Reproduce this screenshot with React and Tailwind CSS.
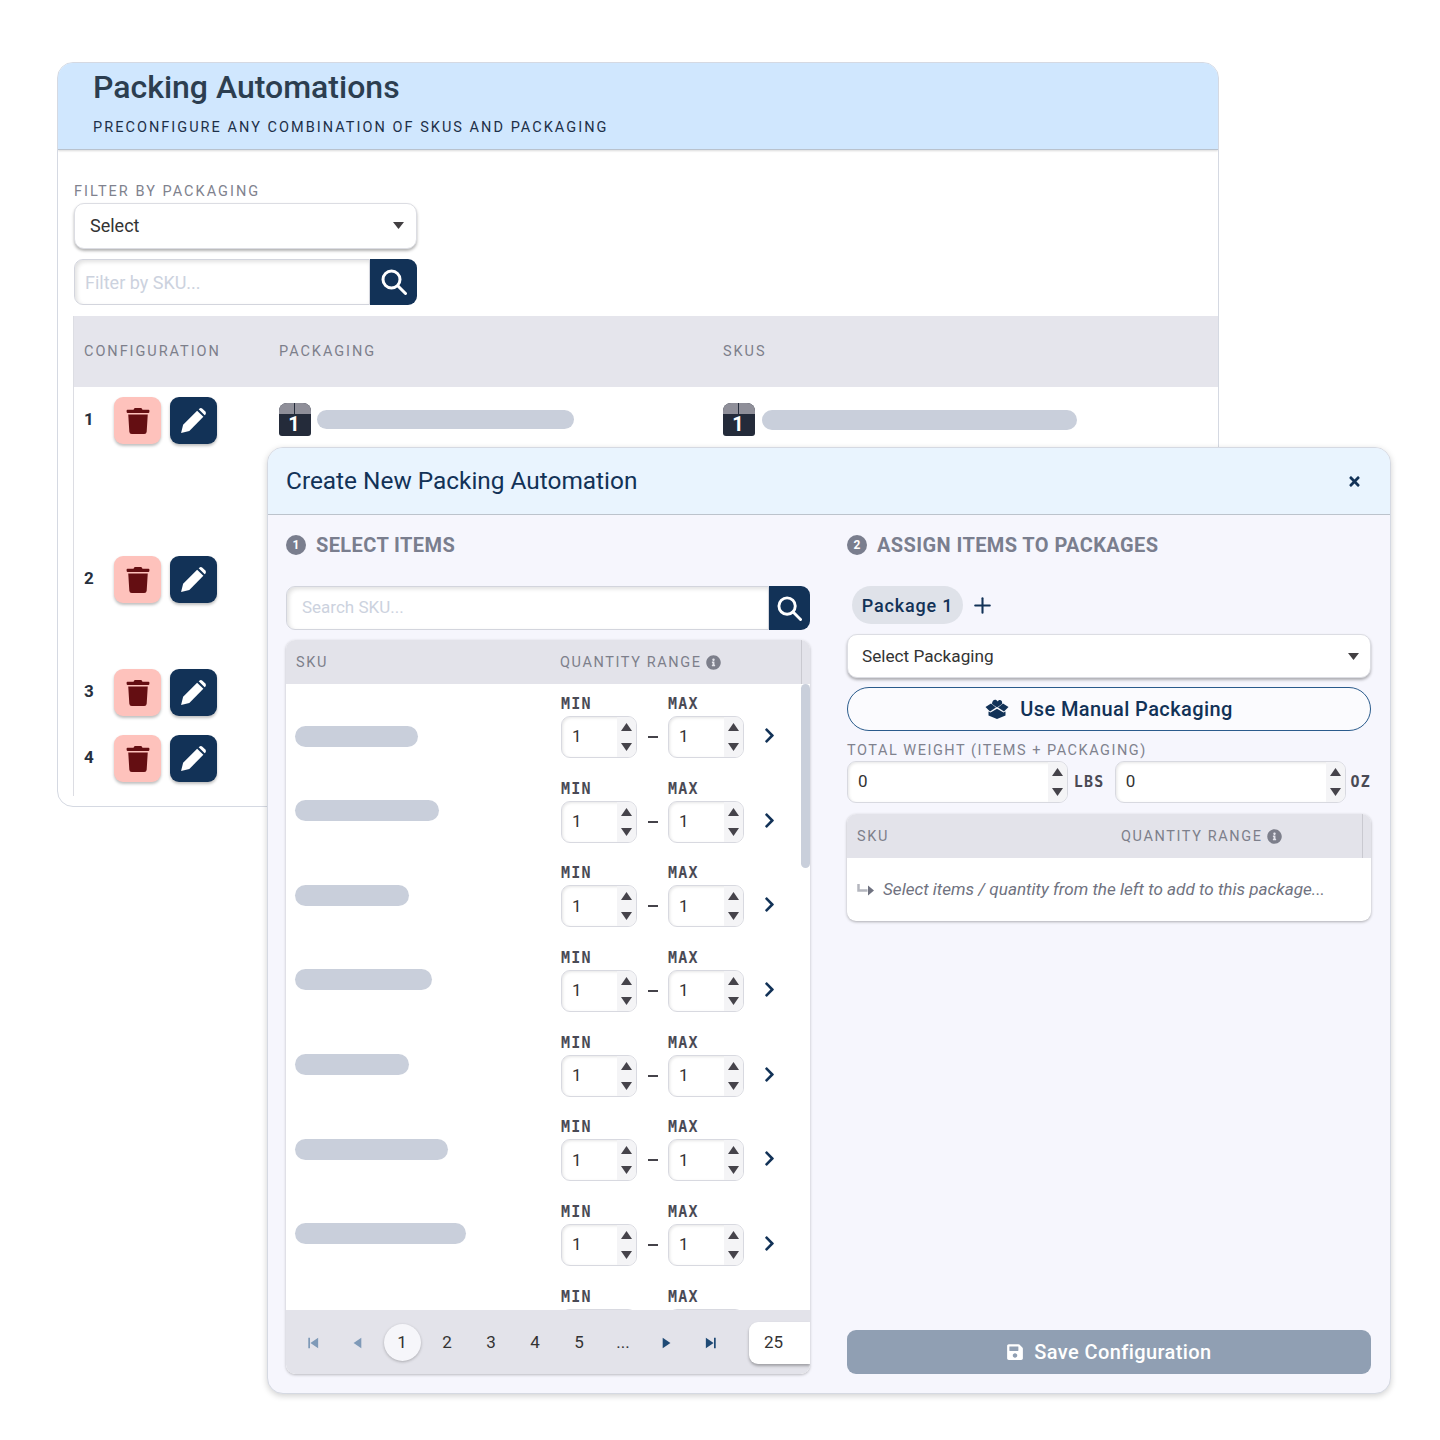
import { FaChevronRight, FaInfoCircle, FaSave, FaTimes, FaTrash } from 'react-icons/fa';
import { Plus } from 'lucide-react';

const configRows = [
  { id: 1, height: 'h-[159px]' },
  { id: 2, height: 'h-[113px]' },
  { id: 3, height: 'h-[66px]' },
  { id: 4, height: 'h-[61px]' },
];

const skuWidths = ['w-[123px]', 'w-[144px]', 'w-[114px]', 'w-[137px]', 'w-[114px]', 'w-[153px]', 'w-[171px]'];

const PackageBox = () => (
  <div className="relative h-[33px] w-[32px] shrink-0 overflow-hidden rounded-b-[3px] rounded-t-[8px] bg-[#242b3a]">
    <div className="h-[11px] bg-[#8f8f99]" />
    <div className="absolute left-[15px] top-0 h-[11px] w-[1px] bg-[#242b3a]" />
    <div className="absolute inset-x-0 top-[9px] pr-[2px] text-center text-[20px] font-bold leading-[24px] text-white">1</div>
  </div>
);

const Caret = () => (
  <svg width="11" height="7" viewBox="0 0 11 7">
    <path d="M0 0h11L5.5 7z" fill="#423f42" />
  </svg>
);

const SearchIcon = ({ size }) => (
  <svg width={size} height={size} viewBox="0 0 26 26" fill="none" stroke="currentColor" strokeWidth="3" strokeLinecap="round">
    <circle cx="10.5" cy="10.5" r="8.5" />
    <path d="M17 17l7.500 7.500" />
  </svg>
);

const PencilIcon = () => (
  <svg width="27" height="27" viewBox="0 0 26 26" fill="currentColor">
    <path d="M1 25l2-8L16.500 3.500l6 6L9 23z" />
    <path d="M18 2.200l.6-.6q1.500-1.300 3 0l2.800 2.800q1.300 1.500 0 3l-.6.6z" />
  </svg>
);

const ManualBoxIcon = () => (
  <svg width="24" height="20" viewBox="0 0 24 20" fill="currentColor">
    <path d="M7 5c0-5 4.500-5.500 5.500-2.500C14 0 18 .5 17 5l-5 3.500z" />
    <path d="M.5 8L6 4.500l5 4L5 12.500zM23.500 8L18 4.500l-5 4 6 4z" />
    <path d="M3.500 12.500l2 1L12 9.800l6.500 3.700 2-1V16.500L12 20 3.500 16.500z" />
  </svg>
);

const SearchBox = ({ placeholder, height, width, button, text, inset, icon }) => (
  <div className={`flex ${height} ${width}`}>
    <input
      readOnly
      placeholder={placeholder}
      className={`min-w-0 flex-1 rounded-l-[9px] border border-[#d3d5dd] bg-white ${inset} ${text} text-[#333] shadow-[inset_2px_2px_4px_rgba(0,0,0,0.12)] outline-none placeholder:text-[#ccd2de]`}
    />
    <div className={`flex ${button} items-center justify-center rounded-r-[9px] bg-[#123257] text-white`}>
      <SearchIcon size={icon} />
    </div>
  </div>
);

const SelectBox = ({ label, width, height, text, inset }) => (
  <div className={`flex ${width} ${height} items-center justify-between rounded-[10px] border border-[#dcdde3] bg-white ${inset} ${text} text-[#333] shadow-[0_2px_3px_rgba(0,0,0,0.3)]`}>
    <span>{label}</span>
    <Caret />
  </div>
);

const Spinner = ({ value, width, height = 'h-[42px]' }) => (
  <div className={`flex ${width} ${height} overflow-hidden rounded-[9px] border border-[#d8d9e0] bg-white shadow-[inset_1px_1px_3px_rgba(0,0,0,0.1)]`}>
    <div className="flex flex-1 items-center pl-[10px] text-[17px] text-[#333]">{value}</div>
    <div className="flex w-[19px] flex-col items-center justify-center gap-[12px] bg-[#f4f4f6]">
      <svg width="11" height="8" viewBox="0 0 11 8"><path d="M0 8h11L5.500 0z" fill="#45434a" /></svg>
      <svg width="11" height="8" viewBox="0 0 11 8"><path d="M0 0h11L5.500 8z" fill="#45434a" /></svg>
    </div>
  </div>
);

const ConfigRow = ({ id, height }) => (
  <div className={`flex ${height} items-start`}>
    <div className="w-[40px] pl-[10px] pt-[10px] text-[17px] font-bold leading-[24px] text-[#26303e]">{id}</div>
    <div className="flex w-[165px] gap-[9px]">
      <div className="flex h-[47px] w-[47px] items-center justify-center rounded-[9px] bg-[#fec2bc] text-[#640e12] shadow-[0_2px_3px_rgba(0,0,0,0.25)]">
        <FaTrash size={26} />
      </div>
      <div className="flex h-[47px] w-[47px] items-center justify-center rounded-[9px] bg-[#123257] text-white shadow-[0_2px_3px_rgba(0,0,0,0.25)]">
        <PencilIcon />
      </div>
    </div>
    {id === 1 && (
      <div className="flex pt-[6px]">
        <div className="flex w-[444px] items-center gap-[6px]">
          <PackageBox />
          <div className="h-[19px] w-[257px] rounded-full bg-[#c9cfdb]" />
        </div>
        <div className="flex items-center gap-[7px]">
          <PackageBox />
          <div className="h-[20px] w-[315px] rounded-full bg-[#c9cfdb]" />
        </div>
      </div>
    )}
  </div>
);

const QtyLabel = ({ children, width }) => (
  <div className={`${width} font-['DejaVu_Sans_Mono',monospace] text-[15px] font-bold leading-[16px] tracking-[0.08em] text-[#4a4a55]`}>
    {children}
  </div>
);

// first row sits lower in the list than the others
const SkuRow = ({ barWidth, first, clipped }) => (
  <div className="flex h-[84.67px] shrink-0 pl-[9px]">
    <div className={`flex w-[266px] items-center ${first ? 'pt-[20px]' : 'pb-[1px]'}`}>
      {barWidth && <div className={`h-[21px] ${barWidth} rounded-full bg-[#c9cfdb]`} />}
    </div>
    <div className="pt-[12px]">
      <div className="flex">
        <QtyLabel width="w-[107px]">MIN</QtyLabel>
        <QtyLabel width="w-[76px]">MAX</QtyLabel>
      </div>
      <div className="mt-[4px] flex items-center">
        <Spinner value={clipped ? '' : '1'} width="w-[76px]" />
        <div className="flex w-[31px] justify-center">
          <div className="h-[2px] w-[10px] bg-[#45434a]" />
        </div>
        <Spinner value={clipped ? '' : '1'} width="w-[76px]" />
        <FaChevronRight size={17} className="ml-[17px] -mt-[3px] text-[#123257]" />
      </div>
    </div>
  </div>
);

const TableHead = () => (
  <div className="relative flex h-[44px] shrink-0 items-center bg-[#e3e3ea] pt-[1px] text-[14.5px] tracking-[0.11em] text-[#7d7f8b]">
    <div className="w-[274px] pl-[10px]">SKU</div>
    <div>QUANTITY RANGE</div>
    <FaInfoCircle size={15} className="ml-[5px] text-[#7d7f8b]" />
    <div className="absolute right-[8px] top-0 h-[44px] w-[1px] bg-[#c9c9d0]" />
  </div>
);

const SectionTitle = ({ n, children }) => (
  <div className="flex h-[22px] items-center gap-[10px]">
    <div className="flex h-[20px] w-[20px] items-center justify-center rounded-full bg-[#7a7e8e] text-[12px] font-bold text-white">{n}</div>
    <div className="text-[20px] font-bold tracking-[0.02em] text-[#7a7e8e]">{children}</div>
  </div>
);

const PagerIcon = ({ d, color }) => (
  <div className="flex w-[44px] justify-center">
    <svg width="12" height="12" viewBox="0 0 14 14">
      <path d={d} fill={color} />
    </svg>
  </div>
);

const Pagination = () => (
  <div className="flex h-[64px] shrink-0 items-center rounded-b-[9px] bg-[#e3e3ea] pl-[5px] pt-[1px] text-[17px] text-[#333]">
    <PagerIcon d="M1.500 1h2v12h-2zM13 1v12L4 7z" color="#7f9ab8" />
    <PagerIcon d="M12 1v12L3 7z" color="#7f9ab8" />
    <div className="ml-[1px] flex w-[44px] justify-center">
      <div className="flex h-[37px] w-[37px] items-center justify-center rounded-full bg-[#f6f6fa] shadow-[0_1px_3px_rgba(0,0,0,0.25)]">1</div>
    </div>
    <div className="ml-[1px] flex">
      {['2', '3', '4', '5', '...'].map((p) => (
        <div key={p} className="w-[44px] text-center">{p}</div>
      ))}
    </div>
    <PagerIcon d="M2 1v12l9-6z" color="#1f4a75" />
    <PagerIcon d="M10.500 1h2v12h-2zM1 1v12l9-6z" color="#1f4a75" />
    <div className="ml-auto flex h-[42px] w-[61px] items-center rounded-l-[9px] bg-white pl-[15px] shadow-[0_2px_3px_rgba(0,0,0,0.3)]">25</div>
  </div>
);

export default function App() {
  return (
    <div className="relative h-[1440px] w-[1440px] bg-white pl-[57px] pt-[62px] font-[Roboto,sans-serif]">
      {/* back panel */}
      <div className="h-[745px] w-[1162px] overflow-hidden rounded-[16px] border border-[#d5d9e2] bg-white">
        <div className="h-[87px] border-b border-[#b9c2cd] bg-[#d0e7fe] pl-[35px] pt-[5px] shadow-[0_1px_2px_rgba(0,0,0,0.15)]">
          <h1 className="text-[32px] font-medium leading-[38px] text-[#2c3e50]">Packing Automations</h1>
          <p className="mt-[13px] text-[14.5px] leading-[18px] tracking-[0.14em] text-[#1d3049]">PRECONFIGURE ANY COMBINATION OF SKUS AND PACKAGING</p>
        </div>
        <div className="pl-[16px] pt-[33px]">
          <div className="text-[14.5px] leading-[18px] tracking-[0.14em] text-[#80828e]">FILTER BY PACKAGING</div>
          <div className="mt-[2px]">
            <SelectBox label="Select" width="w-[343px]" height="h-[46px]" text="text-[18px]" inset="pb-[1px] pl-[15px] pr-[12px]" />
          </div>
          <div className="mt-[10px]">
            <SearchBox placeholder="Filter by SKU..." height="h-[46px]" width="w-[343px]" button="w-[47px]" text="text-[18px]" inset="pl-[10px]" icon={26} />
          </div>
          <div className="-ml-[1px] mt-[11px] border-l border-[#dcdde3]">
            <div className="flex h-[71px] items-center bg-[#e5e5ec] text-[14.5px] tracking-[0.135em] text-[#7d7f8b]">
              <div className="w-[205px] pl-[10px]">CONFIGURATION</div>
              <div className="w-[444px]">PACKAGING</div>
              <div>SKUS</div>
            </div>
            <div className="pt-[10px]">
              {configRows.map((r) => (
                <ConfigRow key={r.id} id={r.id} height={r.height} />
              ))}
            </div>
          </div>
        </div>
      </div>

      {/* modal */}
      <div className="absolute left-[267px] top-[447px] flex h-[947px] w-[1124px] flex-col overflow-hidden rounded-[16px] border border-[#d5d9e2] bg-[#f6f6fd] shadow-[0_2px_6px_rgba(0,0,0,0.18)]">
        <div className="flex h-[67px] shrink-0 items-center justify-between border-b border-[#bcc3cc] bg-[#e9f4fe] pl-[18px] pr-[28px]">
          <div className="pb-[1px] text-[24.4px] leading-[30px] text-[#123257]">Create New Packing Automation</div>
          <FaTimes size={15} className="text-[#123257]" />
        </div>
        <div className="flex min-h-0 flex-1 gap-[37px] px-[18px] py-[19px]">
          {/* left column */}
          <div className="flex w-[524px] flex-col">
            <SectionTitle n="1">SELECT ITEMS</SectionTitle>
            <div className="mt-[30px]">
              <SearchBox placeholder="Search SKU..." height="h-[44px]" width="w-[524px]" button="w-[41px]" text="text-[17px]" inset="pl-[15px]" icon={25} />
            </div>
            <div className="mt-[10px] flex min-h-0 flex-1 flex-col overflow-hidden rounded-[9px] bg-white shadow-[0_1px_3px_rgba(0,0,0,0.25)]">
              <TableHead />
              <div className="relative min-h-0 flex-1 overflow-hidden">
                {skuWidths.map((w, i) => (
                  <SkuRow key={w + i} barWidth={w} first={i === 0} />
                ))}
                <SkuRow clipped />
                <div className="absolute right-0 top-0 h-[184px] w-[9px] rounded-full bg-[#c9cfdb]" />
              </div>
              <Pagination />
            </div>
          </div>

          {/* right column */}
          <div className="flex w-[524px] flex-col">
            <SectionTitle n="2">ASSIGN ITEMS TO PACKAGES</SectionTitle>
            <div className="mt-[30px] flex items-center pl-[5px]">
              <div className="flex h-[38px] w-[111px] items-center justify-center rounded-full bg-[#dfe2e9] text-[18px] font-medium tracking-[0.045em] text-[#123257]">Package 1</div>
              <Plus size={25} strokeWidth={2} className="ml-[7px] text-[#123257]" />
            </div>
            <div className="mt-[10px]">
              <SelectBox label="Select Packaging" width="w-[524px]" height="h-[44px]" text="text-[17.2px]" inset="pl-[14px] pr-[11px] pt-[1px]" />
            </div>
            <div className="mt-[9px] flex h-[44px] items-center justify-center gap-[11px] rounded-full border border-[#2a5b8c] bg-white/50 text-[20px] font-medium tracking-[0.02em] text-[#123257]">
              <ManualBoxIcon />
              Use Manual Packaging
            </div>
            <div className="mt-[11px] text-[14.5px] leading-[18px] tracking-[0.105em] text-[#80828e]">TOTAL WEIGHT (ITEMS + PACKAGING)</div>
            <div className="mt-[1px] flex items-center">
              <Spinner value="0" width="w-[221px]" />
              <div className="ml-[6px] w-[41px] font-['DejaVu_Sans_Mono',monospace] text-[15px] font-bold tracking-[0.08em] text-[#4a4a55]">LBS</div>
              <Spinner value="0" width="w-[231px]" />
              <div className="ml-[5px] font-['DejaVu_Sans_Mono',monospace] text-[15px] font-bold tracking-[0.08em] text-[#4a4a55]">OZ</div>
            </div>
            <div className="mt-[11px] overflow-hidden rounded-[9px] bg-white shadow-[0_1px_3px_rgba(0,0,0,0.3)]">
              <TableHead />
              <div className="flex h-[63px] items-center gap-[8px] pl-[10px] text-[17.1px] italic text-[#6f7280]">
                <svg width="18" height="14" viewBox="0 0 18 14">
                  <path d="M1.500 1v6.500h9" fill="none" stroke="#b4b6be" strokeWidth="2.500" />
                  <path d="M11 2.500l6 5-6 5z" fill="#6f7280" />
                </svg>
                Select items / quantity from the left to add to this package...
              </div>
            </div>
            <div className="mt-auto flex h-[44px] items-center justify-center gap-[10px] rounded-[9px] bg-[#909fb3] text-[20px] font-medium tracking-[0.02em] text-white">
              <FaSave size={18} />
              Save Configuration
            </div>
          </div>
        </div>
      </div>
    </div>
  );
}
